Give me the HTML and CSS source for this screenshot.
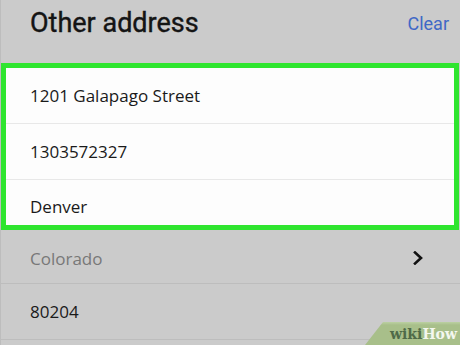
FILE: index.html
```html
<!DOCTYPE html>
<html>
<head>
<meta name="viewport" content="width=device-width, initial-scale=1">
<link rel="stylesheet" href="styles.css">
</head>
<body>
  <div class="screen">
    <div class="header">
      <h1 class="title">Other address</h1>
      <a class="clear" href="#">Clear</a>
    </div>

    <div class="card">
      <div class="row">1201 Galapago Street</div>
      <div class="row">1303572327</div>
      <div class="row row-last">Denver</div>
    </div>

    <div class="row row-gray row-state">
      <span class="muted">Colorado</span>
      <svg class="chevron" width="12" height="14" viewBox="0 0 12 14">
        <path d="M3 1.5 L9 7 L3 12.5" fill="none" stroke="#111" stroke-width="2.6" stroke-linecap="square"/>
      </svg>
    </div>
    <div class="row row-gray">80204</div>

    <div class="wikihow"><span class="wiki">wiki</span><span class="how">How</span></div>
  </div>
</body>
</html>
```

FILE: styles.css
```css
* {
  box-sizing: border-box;
}

body {
  margin: 0;
  background-color: #cbcbcb;
  font-family: "Open Sans", "Noto Sans", sans-serif;
}

.screen {
  position: relative;
  width: 460px;
  height: 345px;
  overflow: hidden;
  border-left: 1px solid #bdbdbd;
}

.header {
  height: 63px;
  display: flex;
  justify-content: space-between;
  align-items: flex-start;
  padding: 7px 11px 0 29px;
}

.title {
  margin: 0;
  font-family: Roboto, "Noto Sans", sans-serif;
  font-weight: 400;
  font-size: 27px;
  line-height: 32px;
  color: #141414;
  -webkit-text-stroke: 0.4px #141414;
}

.clear {
  margin-top: 5px;
  font-family: Roboto, "Noto Sans", sans-serif;
  font-size: 18px;
  line-height: 24px;
  color: #3f68c6;
  text-decoration: none;
}

.card {
  margin-right: 1px;
  border: 5px solid #2fe52f;
  background-color: #fdfdfd;
}

.row {
  height: 56px;
  display: flex;
  align-items: center;
  padding-left: 24px;
  border-bottom: 1px solid #e8e8e8;
  font-size: 17px;
  color: #1a1a1a;
}

.card .row-last {
  height: 45px;
  padding-top: 7px;
  border-bottom: none;
}

.row-gray {
  padding-left: 29px;
  border-bottom: 1px solid #bdbdbd;
}

.row-state {
  height: 54px;
  padding-top: 3px;
  padding-right: 36px;
  justify-content: space-between;
}

.muted {
  color: #787878;
}

.wikihow {
  position: absolute;
  right: 0;
  bottom: 0;
  width: 95px;
  height: 23px;
  padding: 2px 3px 0 0;
  text-align: right;
  background: linear-gradient(#bcd1a3, #a8bf8a 3px);
  clip-path: polygon(18px 0, 100% 0, 100% 100%, 0 100%);
  font-family: "DejaVu Serif", serif;
  font-weight: bold;
  font-size: 14px;
  line-height: 20px;
}

.wiki {
  color: #4f6a48;
}

.how {
  color: #f4f7ef;
}
```
